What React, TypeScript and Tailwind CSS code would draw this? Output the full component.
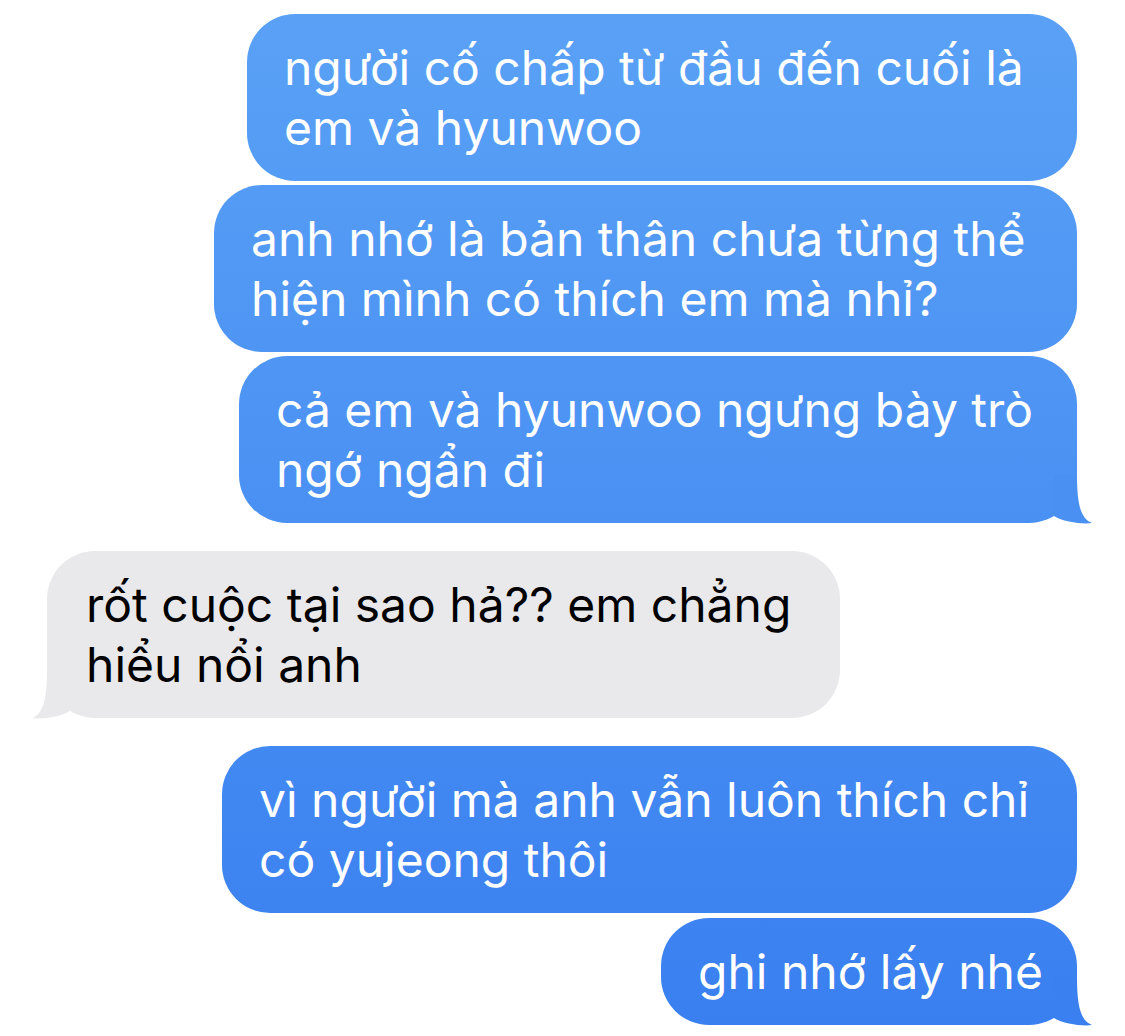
import React from "react";

type Message = {
  id: number;
  from: "me" | "them";
  lines: string[];
  width: string;
  gap: string;
  tail?: string;
};

const messages: Message[] = [
  { id: 1, from: "me", lines: ["người cố chấp từ đầu đến cuối là", "em và hyunwoo"], width: "w-[830px]", gap: "mt-[14px]" },
  { id: 2, from: "me", lines: ["anh nhớ là bản thân chưa từng thể", "hiện mình có thích em mà nhỉ?"], width: "w-[863px]", gap: "mt-[4px]" },
  { id: 3, from: "me", lines: ["cả em và hyunwoo ngưng bày trò", "ngớ ngẩn đi"], width: "w-[838px]", gap: "mt-[4px]", tail: "#4a90f3" },
  { id: 4, from: "them", lines: ["rốt cuộc tại sao hả?? em chẳng", "hiểu nổi anh"], width: "w-[793px]", gap: "mt-[28px]", tail: "#e9e9eb" },
  { id: 5, from: "me", lines: ["vì người mà anh vẫn luôn thích chỉ", "có yujeong thôi"], width: "w-[855px]", gap: "mt-[28px]" },
  { id: 6, from: "me", lines: ["ghi nhớ lấy nhé"], width: "w-[416px]", gap: "mt-[5px]", tail: "#3a80f0" },
];

const Tail = ({ color, side }: { color: string; side: "me" | "them" }) => (
  <svg
    viewBox="-30 -50 50 52"
    className={
      side === "me"
        ? "absolute right-[-20px] bottom-[-2px] w-[50px] h-[52px]"
        : "absolute left-[-20px] bottom-[-2px] w-[50px] h-[52px] -scale-x-100"
    }
  >
    <path d="M 0,-48 C 0,-18 4,-4 15,0 C 6,1.5 -14,-1 -23,-7 L -23,-48 Z" fill={color} />
  </svg>
);

export default function App() {
  return (
    <div className="w-[1125px] h-[1036px] bg-white overflow-hidden flex flex-col font-['Inter',_'Noto_Sans',sans-serif] text-[48px] leading-[60px]">
      {messages.map((m) => (
        <div
          key={m.id}
          className={`${m.gap} flex ${m.from === "me" ? "justify-end pr-[48px]" : "justify-start pl-[47px]"}`}
        >
          <div
            className={
              m.from === "me"
                ? `relative ${m.width} rounded-[48px] pl-[37px] pt-[24px] pb-[23px] text-white bg-fixed bg-linear-to-b from-[#5aa1f6] to-[#3a7ff0]`
                : `relative ${m.width} rounded-[48px] pl-[39px] pt-[24px] pb-[23px] text-black bg-[#e9e9eb]`
            }
          >
            {m.lines.map((l, i) => (
              <div key={i} className="whitespace-nowrap">
                {l}
              </div>
            ))}
            {m.tail && <Tail color={m.tail} side={m.from} />}
          </div>
        </div>
      ))}
    </div>
  );
}
